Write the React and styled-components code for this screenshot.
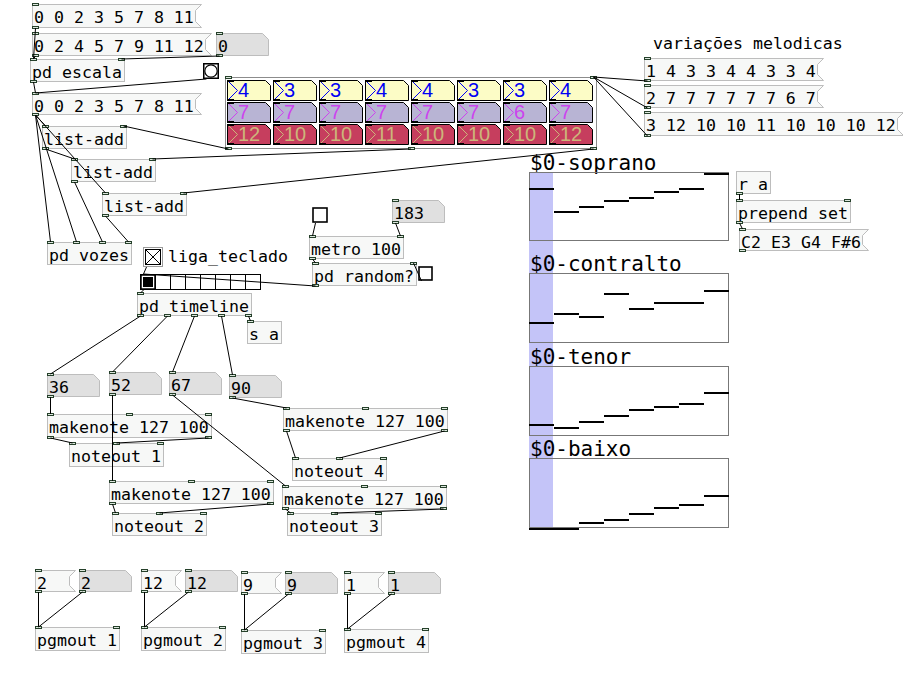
import React from 'react';
import styled, { createGlobalStyle } from 'styled-components';

const MONO = `"DejaVu Sans Mono", "Liberation Mono", monospace`;

const GlobalStyle = createGlobalStyle`
  html, body { margin: 0; padding: 0; background: #ffffff; }
  body { font-family: ${MONO}; }
`;

const placed = (p) => ({
  style: {
    left: p.$x + 'px',
    top: p.$y + 'px',
    width: p.$w != null ? p.$w + 'px' : undefined,
    height: p.$h != null ? p.$h + 'px' : undefined,
  },
});

const Canvas = styled.div`
  position: relative;
  width: 903px;
  height: 683px;
  overflow: hidden;
  background: #ffffff;
  font-family: ${MONO};
  font-size: 16.6px;
  color: #000000;
`;

const ObjBox = styled.div.attrs(placed)`
  position: absolute;
  box-sizing: border-box;
  border: 1px solid #bdbdbd;
  background: #f7f8f7;
  padding: 3px 0 0 1px;
  line-height: 19px;
  white-space: pre;
`;

const ShapeBox = styled.div.attrs(placed)`
  position: absolute;
  box-sizing: border-box;
  padding: 4px 0 0 2px;
  line-height: 19px;
  white-space: pre;
`;

const ShapeSvg = styled.svg`
  position: absolute;
  left: 0;
  top: 0;
  overflow: visible;
`;

const BoxText = styled.span`
  position: relative;
`;

const Comment = styled.div.attrs(placed)`
  position: absolute;
  line-height: 19px;
  white-space: pre;
`;

const Widget = styled.svg.attrs(placed)`
  position: absolute;
  overflow: visible;
`;

const IoletMark = styled.div.attrs(placed)`
  position: absolute;
  box-sizing: border-box;
  width: 7px;
  height: 3px;
  border: 1px solid #25402a;
  background: #dce7dd;
`;

const Gop = styled.div.attrs(placed)`
  position: absolute;
  box-sizing: border-box;
  border: 1px solid #8c8c8c;
  padding: 2px 0 0 1px;
  display: grid;
  grid-template-columns: repeat(8, 44px);
  grid-auto-rows: 21px;
  column-gap: 2px;
  row-gap: 1px;
`;

const NbxCell = styled.div`
  position: relative;
  width: 44px;
  height: 21px;
  box-sizing: border-box;
  padding-left: 11px;
  font-family: "Liberation Sans", Arial, sans-serif;
  font-size: 20px;
  line-height: 21px;
  color: ${(p) => p.$fg};
`;

const PlayCanvas = styled.div.attrs(placed)`
  position: absolute;
  background: #c4c4f8;
`;

const ArrayNode = styled.div.attrs(placed)`
  position: absolute;
  display: flex;
  flex-direction: column;
`;

const ArrayLabel = styled.div`
  height: 18px;
  line-height: 19px;
  font-size: 21px;
  padding-left: 1px;
  white-space: pre;
`;

const Graph = styled.div`
  position: relative;
  box-sizing: border-box;
  width: 200px;
  height: ${(p) => p.$h}px;
  border: 1px solid #777777;
`;

const GraphSvg = styled.svg`
  position: absolute;
  left: -1px;
  top: -1px;
  overflow: visible;
`;

const Wires = styled.svg`
  position: absolute;
  left: 0;
  top: 0;
  pointer-events: none;
  overflow: visible;
`;

const OBJ = 'obj';
const MSG = 'msg';
const ATOM = 'atom';

const boxes = [
  { id: 'm1', t: MSG, x: 32, y: 4, text: '0 0 2 3 5 7 8 11', h: 24 },
  { id: 'm2', t: MSG, x: 32, y: 33, text: '0 2 4 5 7 9 11 12' },
  { id: 'n0', t: ATOM, x: 216, y: 33, text: '0' },
  { id: 'escala', t: OBJ, x: 30, y: 59, text: 'pd escala', ins: 2, outs: 1 },
  { id: 'm3', t: MSG, x: 32, y: 93, text: '0 0 2 3 5 7 8 11', h: 22 },
  { id: 'la1', t: OBJ, x: 42, y: 126, text: 'list-add', ins: 2, outs: 1 },
  { id: 'la2', t: OBJ, x: 71, y: 159, text: 'list-add', ins: 2, outs: 1 },
  { id: 'la3', t: OBJ, x: 102, y: 193, text: 'list-add', ins: 2, outs: 1 },
  { id: 'vozes', t: OBJ, x: 47, y: 242, text: 'pd vozes', ins: 4, outs: 0 },
  { id: 'timeline', t: OBJ, x: 137, y: 293, text: 'pd timeline', ins: 1, outs: 5 },
  { id: 'sa', t: OBJ, x: 247, y: 321, text: 's a', ins: 1, outs: 0 },
  { id: 'n183', t: ATOM, x: 392, y: 200, text: '183' },
  { id: 'metro', t: OBJ, x: 309, y: 236, text: 'metro 100', ins: 2, outs: 1 },
  { id: 'random', t: OBJ, x: 312, y: 263, text: 'pd random?', ins: 2, outs: 1 },
  { id: 'v1', t: MSG, x: 644, y: 58, text: '1 4 3 3 4 4 3 3 4' },
  { id: 'v2', t: MSG, x: 644, y: 85, text: '2 7 7 7 7 7 7 6 7' },
  { id: 'v3', t: MSG, x: 644, y: 112, text: '3 12 10 10 11 10 10 10 12', h: 24 },
  { id: 'ra', t: OBJ, x: 736, y: 171, text: 'r a', ins: 0, outs: 1 },
  { id: 'prepend', t: OBJ, x: 736, y: 200, text: 'prepend set', ins: 2, outs: 1 },
  { id: 'chord', t: MSG, x: 739, y: 229, text: 'C2 E3 G4 F#6', h: 22 },
  { id: 'n36', t: ATOM, x: 47, y: 374, text: '36' },
  { id: 'n52', t: ATOM, x: 109, y: 372, text: '52' },
  { id: 'n67', t: ATOM, x: 169, y: 372, text: '67' },
  { id: 'n90', t: ATOM, x: 229, y: 375, text: '90' },
  { id: 'mkA', t: OBJ, x: 47, y: 414, text: 'makenote 127 100', ins: 3, outs: 2, h: 24 },
  { id: 'no1', t: OBJ, x: 69, y: 443, text: 'noteout 1', ins: 3, outs: 0, h: 24 },
  { id: 'mkD', t: OBJ, x: 283, y: 408, text: 'makenote 127 100', ins: 3, outs: 2 },
  { id: 'no4', t: OBJ, x: 292, y: 458, text: 'noteout 4', ins: 3, outs: 0 },
  { id: 'mkB', t: OBJ, x: 109, y: 481, text: 'makenote 127 100', ins: 3, outs: 2 },
  { id: 'mkC', t: OBJ, x: 282, y: 486, text: 'makenote 127 100', ins: 3, outs: 2 },
  { id: 'no2', t: OBJ, x: 112, y: 513, text: 'noteout 2', ins: 3, outs: 0 },
  { id: 'no3', t: OBJ, x: 287, y: 513, text: 'noteout 3', ins: 3, outs: 0 },
  { id: 'pm1', t: MSG, x: 35, y: 570, text: '2', b: 35, h: 22 },
  { id: 'pa1', t: ATOM, x: 79, y: 570, text: '2', h: 22 },
  { id: 'pg1', t: OBJ, x: 35, y: 627, text: 'pgmout 1', ins: 2, outs: 0, h: 24 },
  { id: 'pm2', t: MSG, x: 141, y: 570, text: '12', b: 35, h: 22 },
  { id: 'pa2', t: ATOM, x: 185, y: 570, text: '12', h: 22 },
  { id: 'pg2', t: OBJ, x: 141, y: 627, text: 'pgmout 2', ins: 2, outs: 0, h: 24 },
  { id: 'pm3', t: MSG, x: 241, y: 572, text: '9', b: 35, h: 22 },
  { id: 'pa3', t: ATOM, x: 285, y: 572, text: '9', h: 22 },
  { id: 'pg3', t: OBJ, x: 241, y: 630, text: 'pgmout 3', ins: 2, outs: 0, h: 24 },
  { id: 'pm4', t: MSG, x: 344, y: 572, text: '1', b: 35, h: 22 },
  { id: 'pa4', t: ATOM, x: 388, y: 572, text: '1', h: 22 },
  { id: 'pg4', t: OBJ, x: 344, y: 629, text: 'pgmout 4', ins: 2, outs: 0, h: 24 },
].map((n) => {
  const h = n.h || 23;
  if (n.t === OBJ) return { ...n, h, w: n.text.length * 10 + 5 };
  if (n.t === MSG) {
    const b = n.b || n.text.length * 10 + 4;
    return { ...n, h, b, w: b, ins: 1, outs: 1 };
  }
  return { ...n, h, w: 53, ins: 1, outs: 1 };
});

const widgets = [
  { id: 'bang', x: 203, y: 63, w: 16, h: 16, ins: 1, outs: 1 },
  { id: 'tog1', x: 143, y: 247, w: 20, h: 20, ins: 1, outs: 1 },
  { id: 'hradio', x: 140, y: 274, w: 121, h: 16, ins: 1, outs: 1 },
  { id: 'tog2', x: 312, y: 207, w: 16, h: 16, ins: 1, outs: 1 },
  { id: 'tog3', x: 418, y: 266, w: 15, h: 15, ins: 1, outs: 1 },
  { id: 'gop', x: 225, y: 77, w: 372, h: 72, ins: 2, outs: 3, io: true },
];

const nodes = {};
boxes.forEach((n) => { nodes[n.id] = { ...n, io: true }; });
widgets.forEach((n) => { nodes[n.id] = n; });

const ioX = (n, k, N) => (N > 1 ? n.x + ((n.w - 7) * k) / (N - 1) : n.x);
const outPt = (id, k = 0) => { const n = nodes[id]; return [ioX(n, k, n.outs) + 3.5, n.y + n.h]; };
const inPt = (id, k = 0) => { const n = nodes[id]; return [ioX(n, k, n.ins) + 3.5, n.y]; };

const wires = [
  [outPt('m1'), inPt('escala', 0)],
  [outPt('m2'), inPt('escala', 0)],
  [outPt('n0'), inPt('escala', 1)],
  [outPt('escala'), inPt('m3')],
  [outPt('bang'), inPt('m3')],
  [outPt('m3'), inPt('la1', 0)],
  [outPt('m3'), inPt('vozes', 0)],
  [outPt('m3'), inPt('vozes', 1)],
  [outPt('m3'), inPt('la3', 0)],
  [outPt('la1'), inPt('la2', 0)],
  [outPt('la2'), inPt('vozes', 2)],
  [outPt('la3'), inPt('vozes', 3)],
  [outPt('gop', 0), inPt('la1', 1)],
  [outPt('gop', 1), inPt('la2', 1)],
  [outPt('gop', 2), inPt('la3', 1)],
  [outPt('v1'), inPt('gop', 1)],
  [outPt('v2'), inPt('gop', 1)],
  [outPt('v3'), inPt('gop', 1)],
  [outPt('tog1'), inPt('hradio')],
  [outPt('hradio'), inPt('timeline')],
  [outPt('random'), inPt('hradio')],
  [outPt('tog2'), inPt('metro', 0)],
  [outPt('n183'), inPt('metro', 1)],
  [outPt('metro'), inPt('random', 0)],
  [outPt('tog3'), inPt('random', 1)],
  [outPt('timeline', 0), inPt('n36')],
  [outPt('timeline', 1), inPt('n52')],
  [outPt('timeline', 2), inPt('n67')],
  [outPt('timeline', 3), inPt('n90')],
  [outPt('timeline', 4), inPt('sa')],
  [outPt('n36'), inPt('mkA', 0)],
  [outPt('n52'), inPt('mkB', 0)],
  [outPt('n67'), inPt('mkC', 0)],
  [outPt('n90'), inPt('mkD', 0)],
  [outPt('mkA', 0), inPt('no1', 0)],
  [outPt('mkA', 1), inPt('no1', 1)],
  [outPt('mkB', 0), inPt('no2', 0)],
  [outPt('mkB', 1), inPt('no2', 1)],
  [outPt('mkC', 0), inPt('no3', 0)],
  [outPt('mkC', 1), inPt('no3', 1)],
  [outPt('mkD', 0), inPt('no4', 0)],
  [outPt('mkD', 1), inPt('no4', 1)],
  [outPt('ra'), inPt('prepend', 0)],
  [outPt('prepend'), inPt('chord')],
  [outPt('pm1'), inPt('pg1', 0)],
  [outPt('pa1'), inPt('pg1', 0)],
  [outPt('pm2'), inPt('pg2', 0)],
  [outPt('pa2'), inPt('pg2', 0)],
  [outPt('pm3'), inPt('pg3', 0)],
  [outPt('pa3'), inPt('pg3', 0)],
  [outPt('pm4'), inPt('pg4', 0)],
  [outPt('pa4'), inPt('pg4', 0)],
];

const iolets = [];
Object.values(nodes).forEach((n) => {
  if (!n.io) return;
  for (let k = 0; k < (n.ins || 0); k++) iolets.push({ key: n.id + 'i' + k, x: ioX(n, k, n.ins), y: n.y - 1 });
  for (let k = 0; k < (n.outs || 0); k++) iolets.push({ key: n.id + 'o' + k, x: ioX(n, k, n.outs), y: n.y + n.h - 2 });
});

const rows = [
  { bg: '#fcfcc6', fg: '#0000f4', vals: [4, 3, 3, 4, 4, 3, 3, 4] },
  { bg: '#b8b4d4', fg: '#cc44ee', vals: [7, 7, 7, 7, 7, 7, 6, 7] },
  { bg: '#c63e5e', fg: '#ccb67a', vals: [12, 10, 10, 11, 10, 10, 10, 12] },
];

const arrays = [
  { name: '$0-soprano', top: 172, h: 69, ys: [17, 40, 35, 29, 26, 20, 17, 2] },
  { name: '$0-contralto', top: 273, h: 70, ys: [50, 41, 44, 21, 36, 30, 30, 18] },
  { name: '$0-tenor', top: 366, h: 70, ys: [59, 62, 56, 50, 44, 41, 38, 27] },
  { name: '$0-baixo', top: 458, h: 70, ys: [71, 71, 65, 62, 56, 50, 47, 38] },
];

function Box({ n }) {
  if (n.t === OBJ) {
    return <ObjBox $x={n.x} $y={n.y} $w={n.w} $h={n.h}>{n.text}</ObjBox>;
  }
  const h = n.h;
  const c = 6;
  let points;
  let fill;
  let w;
  if (n.t === MSG) {
    const b = n.b;
    w = b + c;
    points = `0.5,0.5 ${b + c - 0.5},0.5 ${b - 0.5},${c + 0.5} ${b - 0.5},${h - c - 0.5} ${b + c - 0.5},${h - 0.5} 0.5,${h - 0.5}`;
    fill = '#f7f8f7';
  } else {
    w = n.w;
    points = `0.5,0.5 ${w - c - 0.5},0.5 ${w - 0.5},${c + 0.5} ${w - 0.5},${h - 0.5} 0.5,${h - 0.5}`;
    fill = '#e0e0e0';
  }
  return (
    <ShapeBox $x={n.x} $y={n.y} $w={w} $h={h}>
      <ShapeSvg width={w} height={h}>
        <polygon points={points} fill={fill} stroke="#bdbdbd" strokeWidth="1" />
      </ShapeSvg>
      <BoxText>{n.text}</BoxText>
    </ShapeBox>
  );
}

function Nbx({ v, bg, fg }) {
  return (
    <NbxCell $fg={fg}>
      <ShapeSvg width="44" height="21">
        <polygon points="0.5,0.5 38.5,0.5 43.5,5.5 43.5,20.5 0.5,20.5" fill={bg} stroke="#000" strokeWidth="1" />
        <polyline points="0.5,0.5 10.5,10.5 0.5,20.5" fill="none" stroke={fg} strokeWidth="1" />
        <rect x="0" y="19" width="7" height="2" fill="#000" />
        <rect x="0" y="0" width="7" height="2" fill="#000" />
      </ShapeSvg>
      <BoxText>{v}</BoxText>
    </NbxCell>
  );
}

function Toggle({ id, on }) {
  const n = nodes[id];
  return (
    <Widget $x={n.x} $y={n.y} $w={n.w} $h={n.h} viewBox={`0 0 ${n.w} ${n.h}`}>
      {on ? (
        <>
          <rect x="0.5" y="0.5" width={n.w - 1} height={n.h - 1} fill="#fff" stroke="#9a9a9a" />
          <rect x="2.5" y="2.5" width={n.w - 5} height={n.h - 5} fill="#fff" stroke="#000" />
          <path d={`M3 3 L${n.w - 3} ${n.h - 3} M${n.w - 3} 3 L3 ${n.h - 3}`} stroke="#000" strokeWidth="1" />
        </>
      ) : (
        <rect x="1" y="1" width={n.w - 2} height={n.h - 2} fill="#fff" stroke="#000" strokeWidth="1.6" />
      )}
    </Widget>
  );
}

function Bang() {
  const n = nodes.bang;
  return (
    <Widget $x={n.x} $y={n.y} $w={n.w} $h={n.h}>
      <rect x="0.75" y="0.75" width="14.5" height="14.5" fill="#fff" stroke="#000" strokeWidth="1.5" />
      <circle cx="8" cy="8" r="6.2" fill="#fff" stroke="#000" strokeWidth="1.2" />
    </Widget>
  );
}

function HRadio() {
  const n = nodes.hradio;
  const cells = Array.from({ length: 8 }, (_, i) => i);
  return (
    <Widget $x={n.x} $y={n.y} $w={n.w} $h={n.h}>
      <rect x="0.5" y="0.5" width="120" height="15" fill="#fff" stroke="#000" />
      {cells.slice(1).map((i) => (
        <line key={i} x1={i * 15 + 0.5} y1="0" x2={i * 15 + 0.5} y2="16" stroke="#000" />
      ))}
      <rect x="1" y="1" width="14" height="14" fill="none" stroke="#000" strokeWidth="1.5" />
      <rect x="3" y="3" width="10" height="10" fill="#000" />
    </Widget>
  );
}

export default function App() {
  const g = nodes.gop;
  return (
    <>
      <GlobalStyle />
      <Canvas>
        <PlayCanvas $x={529} $y={172} $w={24} $h={355} />
        {arrays.map((a) => (
          <ArrayNode key={a.name} $x={529} $y={a.top - 18}>
            <ArrayLabel>{a.name}</ArrayLabel>
            <Graph $h={a.h}>
              <GraphSvg width="200" height={a.h}>
                {a.ys.map((y, i) => (
                  <line key={i} x1={i * 25} y1={y} x2={(i + 1) * 25} y2={y} stroke="#000" strokeWidth="2" />
                ))}
              </GraphSvg>
            </Graph>
          </ArrayNode>
        ))}

        <Comment $x={653} $y={34}>variações melodicas</Comment>
        <Comment $x={168} $y={247}>liga_teclado</Comment>

        <Gop $x={g.x} $y={g.y} $w={g.w} $h={g.h}>
          {rows.map((r, ri) => r.vals.map((v, ci) => (
            <Nbx key={ri + '-' + ci} v={v} bg={r.bg} fg={r.fg} />
          )))}
        </Gop>

        {boxes.map((n) => <Box key={n.id} n={n} />)}

        <Bang />
        <Toggle id="tog1" on />
        <Toggle id="tog2" />
        <Toggle id="tog3" />
        <HRadio />

        {iolets.map((io) => <IoletMark key={io.key} $x={io.x} $y={io.y} />)}

        <Wires width="903" height="683">
          {wires.map(([a, b], i) => (
            <line key={i} x1={a[0]} y1={a[1]} x2={b[0]} y2={b[1]} stroke="#000" strokeWidth="1" />
          ))}
        </Wires>
      </Canvas>
    </>
  );
}
